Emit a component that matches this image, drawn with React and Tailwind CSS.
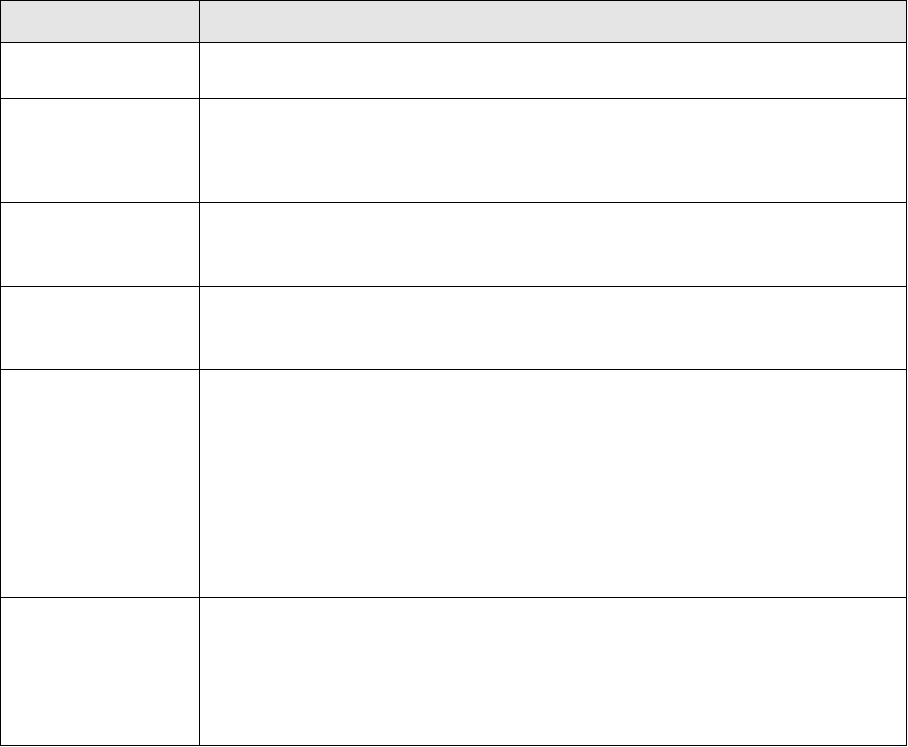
import React from "react";

// Row heights include each row's bottom border
const rows = [
  { h: "h-[56px]" },
  { h: "h-[104px]" },
  { h: "h-[84px]" },
  { h: "h-[83px]" },
  { h: "h-[228px]" },
];

const App = () => {
  return (
    <div className="w-[908px] h-[747px] bg-white" style={{ fontFamily: "'Liberation Sans', Arial, sans-serif" }}>
      <div className="w-[907px] border border-black flex flex-col">
        {/* Header */}
        <div className="flex h-[42px] border-b border-black bg-[#e5e5e5]">
          <div className="w-[199px] border-r border-black"></div>
          <div className="flex-1"></div>
        </div>

        {rows.map((row, i) => (
          <div key={i} className={`flex ${row.h} border-b border-black`}>
            <div className="w-[199px] border-r border-black"></div>
            <div className="flex-1"></div>
          </div>
        ))}

        {/* Last row has no bottom border of its own */}
        <div className="flex h-[147px]">
          <div className="w-[199px] border-r border-black"></div>
          <div className="flex-1"></div>
        </div>
      </div>
    </div>
  );
};

export default App;
